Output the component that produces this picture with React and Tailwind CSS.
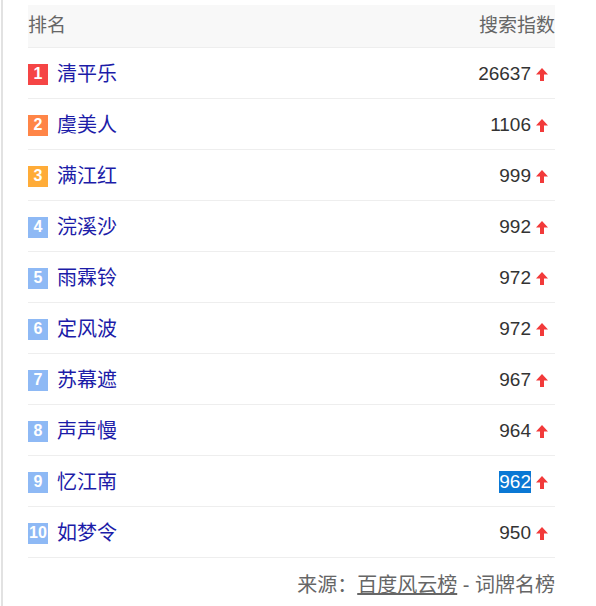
const rows = [
  { rank: 1, name: "清平乐", value: "26637" },
  { rank: 2, name: "虞美人", value: "1106" },
  { rank: 3, name: "满江红", value: "999" },
  { rank: 4, name: "浣溪沙", value: "992" },
  { rank: 5, name: "雨霖铃", value: "972" },
  { rank: 6, name: "定风波", value: "972" },
  { rank: 7, name: "苏幕遮", value: "967" },
  { rank: 8, name: "声声慢", value: "964" },
  { rank: 9, name: "忆江南", value: "962", selected: true },
  { rank: 10, name: "如梦令", value: "950" },
];

// badge colours for top 3, the rest are light blue
const badgeClass = (rank) => {
  if (rank === 1) return "bg-[#f54545]";
  if (rank === 2) return "bg-[#ff8547]";
  if (rank === 3) return "bg-[#ffac38]";
  return "bg-[#8eb9f5]";
};

function UpArrow() {
  return (
    <svg width="12" height="13" viewBox="0 0 12 13" className="shrink-0">
      <path d="M6 0 L12 6.5 L8 6.5 L8 13 L4 13 L4 6.5 L0 6.5 Z" fill="#f23a3a" />
    </svg>
  );
}

export default function App() {
  return (
    <div
      className="min-h-[606px] bg-white ml-[1px] border-l-2 border-[#e2e2e2] pl-[25px] pt-[5px]"
      style={{ fontFamily: '"Liberation Sans", "Noto Sans CJK SC", sans-serif' }}
    >
      <div className="w-[527px]">
        {/* header */}
        <div className="h-[43px] bg-[#f8f8f8] border-b border-[#eeeeee] flex items-center justify-between text-[19px] text-[#666666]">
          <span>排名</span>
          <span>搜索指数</span>
        </div>

        {/* rows */}
        {rows.map((r) => (
          <div
            key={r.rank}
            className="h-[51px] border-b border-[#eeeeee] flex items-center justify-between pr-[7px] pt-[2px]"
          >
            <div className="flex items-center gap-[9px]">
              <span
                className={`w-[20px] h-[21px] flex items-center justify-center text-white text-[16px] font-bold leading-none ${badgeClass(r.rank)}`}
              >
                {r.rank}
              </span>
              <span className="text-[20px] text-[#1c1ca8]">{r.name}</span>
            </div>
            <div className="flex items-center gap-[5px]">
              <span
                className={`text-[19px] leading-[22px] ${
                  r.selected ? "bg-[#0a78d4] text-white" : "text-[#333333]"
                }`}
              >
                {r.value}
              </span>
              <UpArrow />
            </div>
          </div>
        ))}

        {/* footer */}
        <div className="pt-[12px] text-right text-[20px] text-[#666666]">
          来源：<span className="underline">百度风云榜</span> - 词牌名榜
        </div>
      </div>
    </div>
  );
}
